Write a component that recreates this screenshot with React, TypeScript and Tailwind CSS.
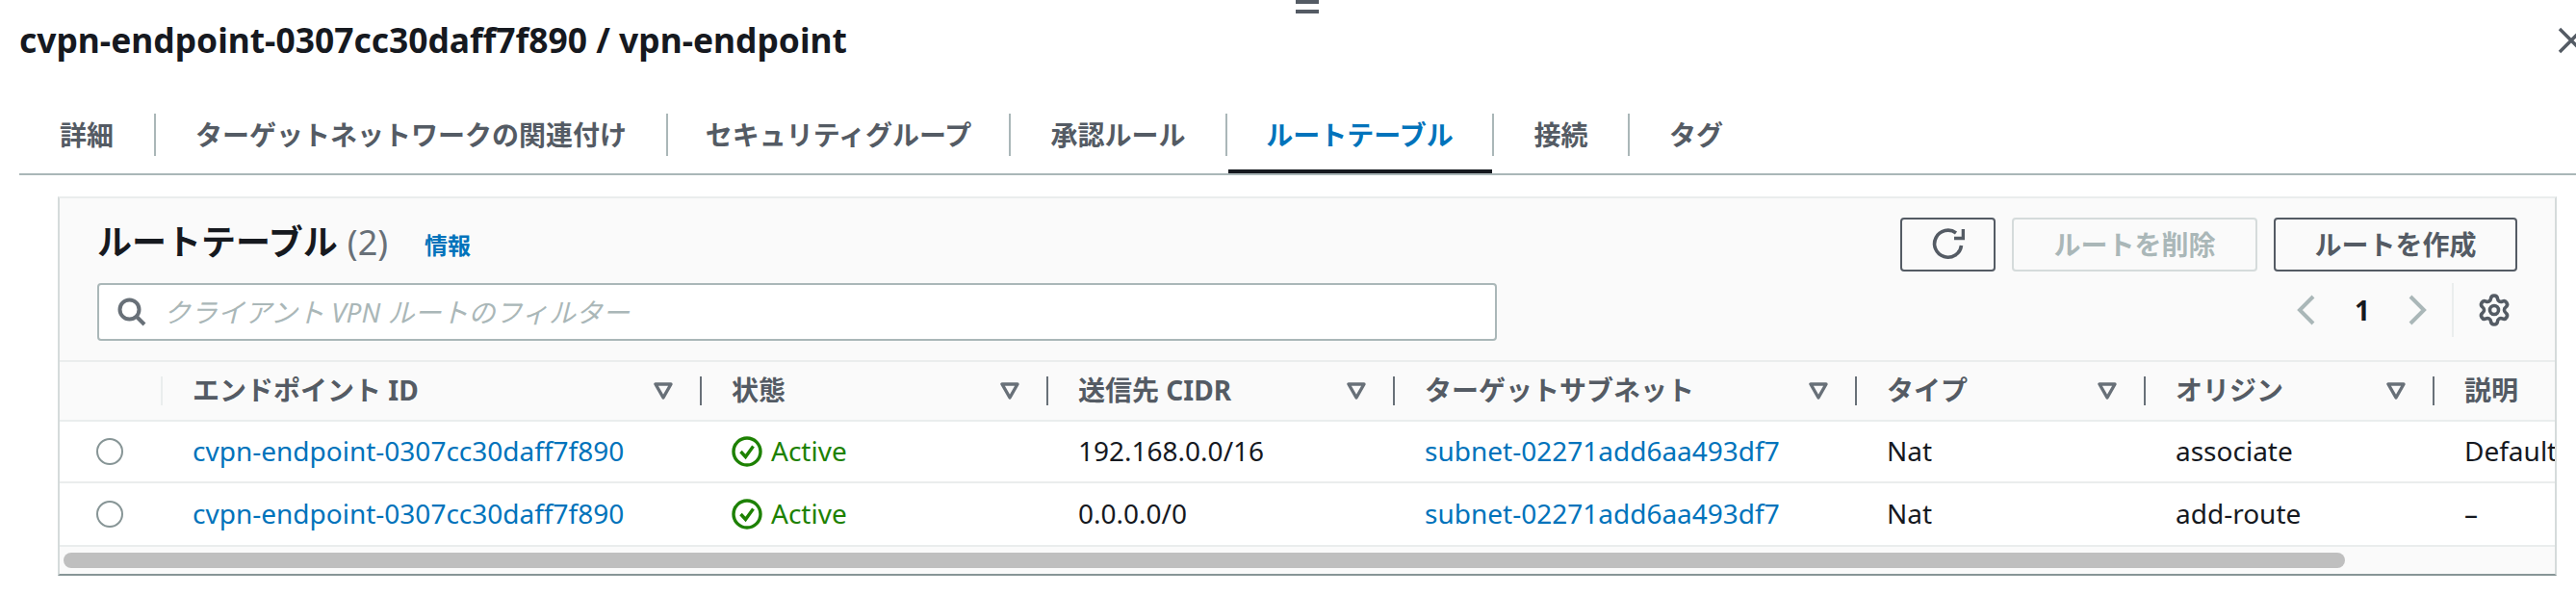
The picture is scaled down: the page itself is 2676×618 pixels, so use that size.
import { Settings } from "lucide-react";

const font = "font-['Noto_Sans','Noto_Sans_CJK_JP',sans-serif]";

const tabs = [
  { label: "詳細", width: "w-[140px]" },
  { label: "ターゲットネットワークの関連付け", width: "w-[532px]" },
  { label: "セキュリティグループ", width: "w-[356px]" },
  { label: "承認ルール", width: "w-[225px]" },
  { label: "ルートテーブル", width: "w-[277px]", active: true },
  { label: "接続", width: "w-[141px]" },
  { label: "タグ", width: "w-[140px]" },
];

const columns = ["エンドポイント ID", "状態", "送信先 CIDR", "ターゲットサブネット", "タイプ", "オリジン", "説明"];

const routes = [
  { cidr: "192.168.0.0/16", origin: "associate", description: "Default", height: "h-[64px]" },
  { cidr: "0.0.0.0/0", origin: "add-route", description: "–", height: "h-[66px]" },
];

const gridCols = "grid grid-cols-[105px_560px_360px_360px_480px_300px_300px_127px]";

function FilterIcon() {
  return (
    <svg width="20" height="20" viewBox="0 0 20 20" fill="none" className="shrink-0">
      <path d="M2 3h16l-8 14z" stroke="#687078" strokeWidth="3.4" strokeLinejoin="round" />
    </svg>
  );
}

function ActiveIcon() {
  return (
    <svg width="32" height="32" viewBox="0 0 32 32" fill="none" className="shrink-0">
      <circle cx="16" cy="16" r="14" stroke="#1d8102" strokeWidth="3.4" />
      <path d="M9.5 16l5 5.5 8-11" stroke="#1d8102" strokeWidth="3.4" />
    </svg>
  );
}

export default function App() {
  return (
    <div className={`${font} relative w-[2676px] h-[618px] overflow-hidden bg-white text-[#16191f]`}>
      {/* resize handle at the top of the split panel */}
      <div className="absolute left-[1346px] top-0 w-[24px] flex flex-col gap-[6px]">
        <div className="h-[4px] bg-[#545b64]" />
        <div className="h-[4px] bg-[#545b64]" />
      </div>

      <div className="h-[84px] pl-[20px] flex items-center justify-between">
        <h1 className="text-[35.4px] font-bold leading-none whitespace-nowrap">cvpn-endpoint-0307cc30daff7f890 / vpn-endpoint</h1>
        <svg width="28" height="28" viewBox="0 0 28 28" fill="none" className="mr-[-9px] shrink-0">
          <path d="M2 2l24 24M26 2L2 26" stroke="#545b64" strokeWidth="3.4" />
        </svg>
      </div>

      <div className="mt-[28px] ml-[20px] h-[70px] border-b-2 border-[#aab7b8] flex">
        {tabs.map((tab, i) => (
          <div key={tab.label} className={`${tab.width} h-[68px] relative`}>
            <div
              className={`h-[44px] mt-[6px] flex items-center justify-center text-[28px] font-bold whitespace-nowrap ${
                i > 0 ? "border-l-2 border-[#aab7b8]" : ""
              } ${tab.active ? "text-[#0073bb]" : "text-[#545b64]"}`}
            >
              {tab.label}
            </div>
            {tab.active && <div className="absolute left-[3px] right-0 bottom-0 h-[4px] bg-[#16191f]" />}
          </div>
        ))}
      </div>

      <div className="mt-[22px] ml-[60px] w-[2596px] h-[394px] overflow-hidden border-t-2 border-x-2 border-b-2 border-t-[#eaeded] border-x-[#d5dbdb] border-b-[#879596] bg-white">
        <div className="h-[168px] bg-[#fafafa] pt-[20px] pl-[39px] pr-[39px] flex justify-between">
          <div className="w-[1454px]">
            <div className="h-[52px] flex items-center">
              <h2 className="text-[36px] font-bold leading-none whitespace-nowrap">ルートテーブル</h2>
              <span className="ml-[10px] text-[36px] leading-none text-[#687078]">(2)</span>
              <a className="ml-[38px] mt-[6px] text-[24px] font-bold text-[#0073bb]">情報</a>
            </div>
            <div className="mt-[16px] h-[60px] bg-white border-2 border-[#aab7b8] rounded-[4px] flex items-center pl-[19px]">
              <svg width="30" height="30" viewBox="0 0 30 30" fill="none" className="shrink-0">
                <circle cx="12.5" cy="12.5" r="10" stroke="#687078" strokeWidth="4" />
                <path d="M19.5 19.5L28 28" stroke="#687078" strokeWidth="4" />
              </svg>
              <span className="ml-[18px] text-[28px] italic text-[#aab7b8] whitespace-nowrap">クライアント VPN ルートのフィルター</span>
            </div>
          </div>

          <div>
            <div className="flex gap-[17px]">
              <button className="w-[99px] h-[56px] border-2 border-[#545b64] rounded-[4px] flex items-center justify-center">
                <svg width="34" height="34" viewBox="0 0 34 34" fill="none">
                  <path d="M25 5A14 14 0 1 0 30.5 18" stroke="#545b64" strokeWidth="3.6" />
                  <path d="M23 10.5h9.5V1" stroke="#545b64" strokeWidth="3.6" />
                </svg>
              </button>
              <button className="w-[255px] h-[56px] border-2 border-[#d5dbdb] rounded-[4px] text-[28px] font-bold text-[#aab7b8]">ルートを削除</button>
              <button className="w-[253px] h-[56px] border-2 border-[#545b64] rounded-[4px] text-[28px] font-bold text-[#545b64]">ルートを作成</button>
            </div>
            <div className="mt-[12px] h-[56px] flex items-center justify-end pr-[6px]">
              <svg width="20" height="32" viewBox="0 0 20 32" fill="none">
                <path d="M17 2L3 16l14 14" stroke="#aab7b8" strokeWidth="4" />
              </svg>
              <span className="ml-[40px] w-[16px] text-center text-[28px] font-bold">1</span>
              <svg width="20" height="32" viewBox="0 0 20 32" fill="none" className="ml-[39px]">
                <path d="M3 2l14 14L3 30" stroke="#aab7b8" strokeWidth="4" />
              </svg>
              <div className="ml-[26px] h-[56px] border-l-2 border-[#eaeded]" />
              <Settings size={36} strokeWidth={2.4} color="#545b64" className="ml-[24px]" />
            </div>
          </div>
        </div>

        <div className={`${gridCols} h-[64px] bg-[#fafafa] border-y-2 border-[#eaeded]`}>
          <div />
          {columns.map((name, i) => (
            <div key={name} className="flex items-center overflow-hidden">
              <div className={`h-[30px] border-l-2 ${i === 0 ? "border-[#eaeded]" : "border-[#687078]"}`} />
              <span className="pl-[31px] pb-[2px] text-[28px] font-bold text-[#545b64] whitespace-nowrap">{name}</span>
              {i < 6 && (
                <div className="ml-auto mr-[28px]">
                  <FilterIcon />
                </div>
              )}
            </div>
          ))}
        </div>

        {routes.map((route) => (
          <div key={route.cidr} className={`${gridCols} ${route.height} border-b-2 border-[#eaeded] items-center text-[28px]`}>
            <div className="pl-[38px]">
              <div className="w-[28px] h-[28px] rounded-full border-2 border-[#879596]" />
            </div>
            <a className="pl-[33px] pb-[2px] text-[#0073bb] whitespace-nowrap">cvpn-endpoint-0307cc30daff7f890</a>
            <div className="pl-[33px] flex items-center gap-[9px] text-[#1d8102]">
              <ActiveIcon />
              <span className="pb-[2px]">Active</span>
            </div>
            <div className="pl-[33px] pb-[2px]">{route.cidr}</div>
            <a className="pl-[33px] pb-[2px] text-[#0073bb] whitespace-nowrap">subnet-02271add6aa493df7</a>
            <div className="pl-[33px] pb-[2px]">Nat</div>
            <div className="pl-[33px] pb-[2px]">{route.origin}</div>
            <div className="pl-[33px] pb-[2px] whitespace-nowrap">{route.description}</div>
          </div>
        ))}

        <div className="h-[28px] bg-[#fafafa] pt-[6px] pl-[4px]">
          <div className="w-[2370px] h-[16px] rounded-full bg-[#bfbfbf]" />
        </div>
      </div>
    </div>
  );
}
